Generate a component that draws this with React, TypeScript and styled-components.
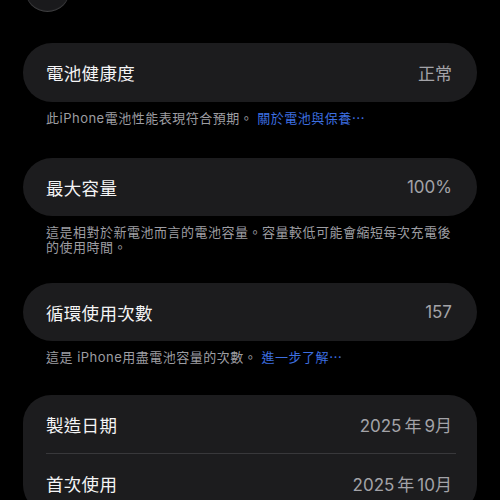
import styled, { createGlobalStyle } from "styled-components";

const GlobalStyle = createGlobalStyle`
  html, body {
    margin: 0;
    padding: 0;
    background: #000;
  }
  body {
    font-family: "Inter", "Noto Sans CJK TC", "Noto Sans", sans-serif;
    -webkit-font-smoothing: antialiased;
  }
`;

const Page = styled.div`
  width: 500px;
  height: 500px;
  overflow: hidden;
  background: #000;
  padding: 0 23px;
  box-sizing: border-box;
  display: flex;
  flex-direction: column;
`;

const BackButton = styled.div`
  width: 45px;
  height: 45px;
  margin-top: -33px;
  margin-left: 2px;
  border-radius: 50%;
  background: #1a1a1c;
  box-shadow: inset 0 -1px 1px rgba(255, 255, 255, 0.18);
  flex-shrink: 0;
`;

const Section = styled.div<{ $top: number }>`
  margin-top: ${(p) => p.$top}px;
  display: flex;
  flex-direction: column;
`;

const Card = styled.div<{ $pill?: boolean }>`
  background: #1c1c1e;
  border-radius: ${(p) => (p.$pill ? "29px" : "28px")};
  display: flex;
  flex-direction: column;
`;

const Row = styled.div<{ $height: number }>`
  height: ${(p) => p.$height}px;
  display: flex;
  align-items: center;
  justify-content: space-between;
  padding: 0 25px 0 23px;
`;

const Label = styled.span`
  color: #f4f4f5;
  font-size: 17.5px;
  letter-spacing: 0.3px;
`;

const Value = styled.span`
  color: #a3a3a8;
  font-size: 17px;
  letter-spacing: 0;
`;

const Gap = styled.span<{ $w?: number }>`
  display: inline-block;
  width: ${(p) => p.$w ?? 3}px;
`;

const Divider = styled.div`
  height: 1px;
  background: #38383b;
  margin: 0 21px 0 23px;
`;

const Caption = styled.p`
  margin: 9px 0 0;
  padding: 0 23px;
  color: #9d9da2;
  font-size: 13px;
  line-height: 15px;
  letter-spacing: 0.5px;
`;

const LinkText = styled.span`
  color: #3d6fe0;
`;

export default function App() {
  return (
    <>
      <GlobalStyle />
      <Page>
        <BackButton />

        <Section $top={31}>
          <Card $pill>
            <Row $height={59}>
              <Label>電池健康度</Label>
              <Value>正常</Value>
            </Row>
          </Card>
          <Caption>
            此iPhone電池性能表現符合預期。<Gap $w={4} />
            <LinkText>關於電池與保養⋯</LinkText>
          </Caption>
        </Section>

        <Section $top={32}>
          <Card $pill>
            <Row $height={58}>
              <Label>最大容量</Label>
              <Value>100%</Value>
            </Row>
          </Card>
          <Caption>
            這是相對於新電池而言的電池容量。容量較低可能會縮短每次充電後的使用時間。
          </Caption>
        </Section>

        <Section $top={28}>
          <Card $pill>
            <Row $height={58}>
              <Label>循環使用次數</Label>
              <Value>157</Value>
            </Row>
          </Card>
          <Caption>
            這是 iPhone用盡電池容量的次數。 <LinkText>進一步了解⋯</LinkText>
          </Caption>
        </Section>

        <Section $top={30}>
          <Card>
            <Row $height={58}>
              <Label>製造日期</Label>
              <Value>
                2025<Gap />年<Gap />9月
              </Value>
            </Row>
            <Divider />
            <Row $height={59}>
              <Label>首次使用</Label>
              <Value>
                2025<Gap />年<Gap />10月
              </Value>
            </Row>
          </Card>
        </Section>
      </Page>
    </>
  );
}
